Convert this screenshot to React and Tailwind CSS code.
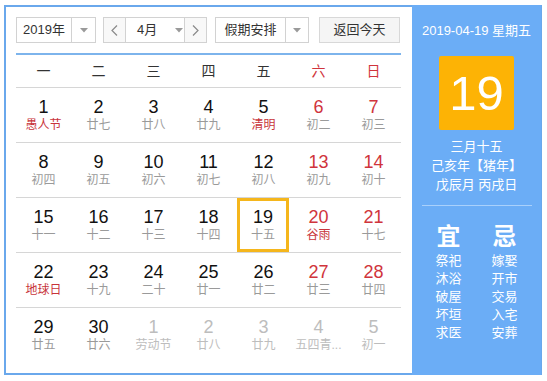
import React from "react";

const F = { fontFamily: '"Liberation Sans", "Noto Sans CJK SC", sans-serif' };

const rows = [
  [
    { d: 1, l: "愚人节", lr: true },
    { d: 2, l: "廿七" },
    { d: 3, l: "廿八" },
    { d: 4, l: "廿九" },
    { d: 5, l: "清明", lr: true },
    { d: 6, l: "初二", dr: true },
    { d: 7, l: "初三", dr: true },
  ],
  [
    { d: 8, l: "初四" },
    { d: 9, l: "初五" },
    { d: 10, l: "初六" },
    { d: 11, l: "初七" },
    { d: 12, l: "初八" },
    { d: 13, l: "初九", dr: true },
    { d: 14, l: "初十", dr: true },
  ],
  [
    { d: 15, l: "十一" },
    { d: 16, l: "十二" },
    { d: 17, l: "十三" },
    { d: 18, l: "十四" },
    { d: 19, l: "十五", today: true },
    { d: 20, l: "谷雨", dr: true, lr: true },
    { d: 21, l: "十七", dr: true },
  ],
  [
    { d: 22, l: "地球日", lr: true },
    { d: 23, l: "十九" },
    { d: 24, l: "二十" },
    { d: 25, l: "廿一" },
    { d: 26, l: "廿二" },
    { d: 27, l: "廿三", dr: true },
    { d: 28, l: "廿四", dr: true },
  ],
  [
    { d: 29, l: "廿五" },
    { d: 30, l: "廿六" },
    { d: 1, l: "劳动节", o: true },
    { d: 2, l: "廿八", o: true },
    { d: 3, l: "廿九", o: true },
    { d: 4, l: "五四青...", o: true },
    { d: 5, l: "初一", o: true },
  ],
];

const Caret = () => (
  <svg width="8" height="5" viewBox="0 0 8 5">
    <path d="M0 0 L8 0 L4 4.5 Z" fill="#9a9a9a" />
  </svg>
);

const Chev = ({ dir }) => (
  <svg width="7" height="11" viewBox="0 0 7 11">
    <path
      d={dir === "l" ? "M6 0.5 L1 5.5 L6 10.5" : "M1 0.5 L6 5.5 L1 10.5"}
      stroke="#8a8a8a"
      strokeWidth="1.2"
      fill="none"
    />
  </svg>
);

function Cell({ c }) {
  let numColor = "text-[#111]";
  if (c.dr) numColor = "text-[#d0343c]";
  if (c.o) numColor = "text-[#bdbdbd]";
  let lunColor = "text-[#9a9a9a]";
  if (c.lr) lunColor = "text-[#c8343a]";
  if (c.o) lunColor = "text-[#bdbdbd]";
  const inner = (
    <>
      <div className={`text-[18px] leading-[20px] ${numColor}`}>{c.d}</div>
      <div className={`text-[12px] leading-[16px] whitespace-nowrap ${lunColor}`}>{c.l}</div>
    </>
  );
  if (c.today) {
    return (
      <div className="w-[55px] h-[54px] flex pl-[1px]">
        <div className="w-[52px] h-[54px] border-[3px] border-[#f5b61c] flex flex-col items-center pt-[6px]">
          {inner}
        </div>
      </div>
    );
  }
  return (
    <div className="w-[55px] h-[54px] flex flex-col items-center pt-[9px]">{inner}</div>
  );
}

export default function App() {
  const week = ["一", "二", "三", "四", "五", "六", "日"];
  return (
    <div className="w-[547px] h-[381px] bg-white pt-[5px] pl-[4px]" style={F}>
      <div className="w-[538px] h-[370px] border-2 border-[#6aa8ec] flex">
        <div className="w-[406px] pl-[10px] pt-[10px]">
          <div className="flex items-center h-[26px] text-[13px] text-[#333]">
            <div className="w-[80px] h-[26px] border border-[#d2d2d2] flex">
              <div className="w-[55px] flex items-center justify-center border-r border-[#d2d2d2]">2019年</div>
              <div className="flex-1 flex items-center justify-center"><Caret /></div>
            </div>
            <div className="w-[104px] h-[26px] border border-[#d2d2d2] flex ml-[7px]">
              <div className="w-[22px] flex items-center justify-center border-r border-[#d2d2d2] bg-[#f8f8f8]"><Chev dir="l" /></div>
              <div className="w-[59px] flex items-center border-r border-[#d2d2d2]">
                <span className="ml-[11px]">4月</span>
                <span className="ml-[18px] flex"><Caret /></span>
              </div>
              <div className="flex-1 flex items-center justify-center bg-[#f8f8f8]"><Chev dir="r" /></div>
            </div>
            <div className="w-[94px] h-[26px] border border-[#d2d2d2] flex ml-[8px]">
              <div className="w-[70px] flex items-center justify-center border-r border-[#d2d2d2]">假期安排</div>
              <div className="flex-1 flex items-center justify-center"><Caret /></div>
            </div>
            <div className="w-[81px] h-[26px] border border-[#d8d8d8] bg-[#f5f5f5] flex items-center justify-center ml-[10px]">
              返回今天
            </div>
          </div>
          <div className="w-[385px] h-[2px] bg-[#7db4ec] mt-[10px]" />
          <div className="w-[385px] h-[33px] flex border-b border-[#d6d6d6] text-[14px]">
            {week.map((w, i) => (
              <div
                key={w}
                className={`w-[55px] flex items-center justify-center ${i >= 5 ? "text-[#d0343c]" : "text-[#333]"}`}
              >
                {w}
              </div>
            ))}
          </div>
          {rows.map((r, i) => (
            <div
              key={i}
              className={`w-[385px] flex ${i < 4 ? "border-b border-[#d6d6d6]" : ""}`}
            >
              {r.map((c, j) => (
                <Cell key={j} c={c} />
              ))}
            </div>
          ))}
        </div>
        <div className="flex-1 bg-[#6badf6] flex flex-col items-center text-white -mt-[2px] -mr-[1px] h-[370px]">
          <div className="text-[13px] leading-[18px] mt-[17px]">2019-04-19 星期五</div>
          <div className="w-[75px] h-[74px] bg-[#fdb305] mt-[16px] flex items-center justify-center rounded-[2px]">
            <span className="text-[49px] leading-none font-light">19</span>
          </div>
          <div className="text-[13px] leading-[19px] mt-[7px] text-center">
            <div>三月十五</div>
            <div>己亥年【猪年】</div>
            <div>戊辰月 丙戌日</div>
          </div>
          <div className="w-[110px] h-[1px] bg-[#a9d0fb] mt-[11px]" />
          <div className="flex gap-[28px] mt-[16px]">
            <div className="flex flex-col items-center w-[28px]">
              <div className="text-[24px] leading-[30px] font-bold">宜</div>
              <div className="text-[13px] leading-[18px] flex flex-col items-center">
                <span>祭祀</span><span>沐浴</span><span>破屋</span><span>坏垣</span><span>求医</span>
              </div>
            </div>
            <div className="flex flex-col items-center w-[28px]">
              <div className="text-[24px] leading-[30px] font-bold">忌</div>
              <div className="text-[13px] leading-[18px] flex flex-col items-center">
                <span>嫁娶</span><span>开市</span><span>交易</span><span>入宅</span><span>安葬</span>
              </div>
            </div>
          </div>
        </div>
      </div>
    </div>
  );
}
